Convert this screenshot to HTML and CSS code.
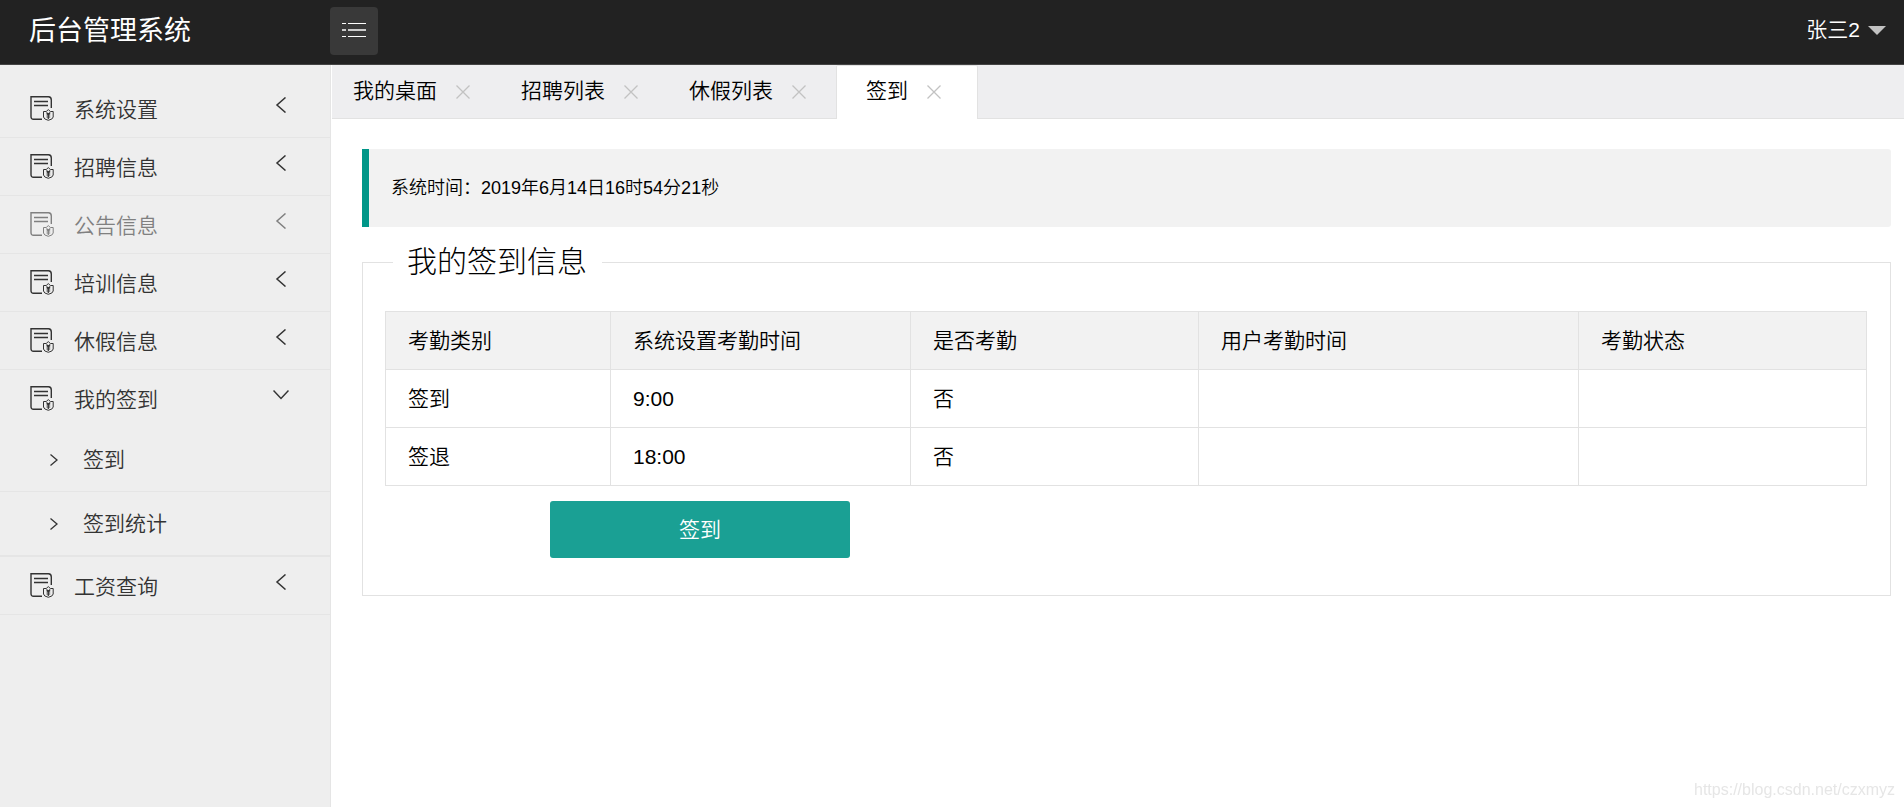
FILE: index.html
```html
<!DOCTYPE html>
<html lang="zh-CN">
<head>
<meta charset="utf-8">
<title>后台管理系统</title>
<link rel="stylesheet" href="styles.css">
</head>
<body>
<svg class="sprite" aria-hidden="true">
  <symbol id="icon-record" viewBox="0 0 24 25">
    <path d="M12 23.300H3.500Q1 23.300 1 20.500V.8H18.500Q21.300 .8 21.300 4V12M4 5.500H18M4 9.500H18" fill="none" stroke="currentColor" stroke-width="1.400"/>
    <path d="M13.500 15.500H16.200L18.300 13.600 20.400 15.500H23.200V21Q23 23.300 18.300 24.300Q13.700 23.300 13.500 21Z" fill="none" stroke="currentColor" stroke-width="1"/>
    <path d="M16.500 16.500L18.300 18.500 20.200 16.500M16.500 19H20.200M16.500 21H20.200M18.300 18.500V23" fill="none" stroke="currentColor" stroke-width="1.200"/>
  </symbol>
  <symbol id="icon-left" viewBox="0 0 16 16"><path d="M12.500 .5L4 8L12.500 15.500" fill="none" stroke="currentColor" stroke-width="1.500"/></symbol>
  <symbol id="icon-down" viewBox="0 0 16 16"><path d="M.5 3.500L8 11.500L15.500 3.500" fill="none" stroke="currentColor" stroke-width="1.500"/></symbol>
  <symbol id="icon-right" viewBox="0 0 8 12"><path d="M.5 .5L7 6L.5 11.500" fill="none" stroke="currentColor" stroke-width="1.300"/></symbol>
  <symbol id="icon-close" viewBox="0 0 14 14"><path d="M.5 .5L13.500 13.500M13.500 .5L.5 13.500" fill="none" stroke="currentColor" stroke-width="1.300"/></symbol>
</svg>

<header class="header">
  <h1 class="logo">后台管理系统</h1>
  <button class="toggle" type="button" aria-label="切换菜单">
    <svg width="24" height="16" viewBox="0 0 24 16"><path d="M0 1.500H4M6 1.500H24M0 14.500H4M6 14.500H24" stroke="#fff" stroke-width="1"/><path d="M0 8H4M6 8H24" stroke="#ccc" stroke-width="2"/></svg>
  </button>
  <button class="user" type="button"><span class="user-name">张三2</span><span class="caret"></span></button>
</header>

<div class="layout">
  <nav class="sidebar">
    <button class="menu-item" type="button"><svg class="menu-icon"><use href="#icon-record"/></svg><span>系统设置</span><svg class="arrow"><use href="#icon-left"/></svg></button>
    <button class="menu-item" type="button"><svg class="menu-icon"><use href="#icon-record"/></svg><span>招聘信息</span><svg class="arrow"><use href="#icon-left"/></svg></button>
    <button class="menu-item muted" type="button"><svg class="menu-icon"><use href="#icon-record"/></svg><span>公告信息</span><svg class="arrow"><use href="#icon-left"/></svg></button>
    <button class="menu-item" type="button"><svg class="menu-icon"><use href="#icon-record"/></svg><span>培训信息</span><svg class="arrow"><use href="#icon-left"/></svg></button>
    <button class="menu-item" type="button"><svg class="menu-icon"><use href="#icon-record"/></svg><span>休假信息</span><svg class="arrow"><use href="#icon-left"/></svg></button>
    <button class="menu-item open" type="button" aria-expanded="true"><svg class="menu-icon"><use href="#icon-record"/></svg><span>我的签到</span><svg class="arrow"><use href="#icon-down"/></svg></button>
    <div class="submenu">
      <a class="sub-item" href="#"><svg class="sub-icon"><use href="#icon-right"/></svg>签到</a>
      <a class="sub-item" href="#"><svg class="sub-icon"><use href="#icon-right"/></svg>签到统计</a>
    </div>
    <button class="menu-item" type="button"><svg class="menu-icon"><use href="#icon-record"/></svg><span>工资查询</span><svg class="arrow"><use href="#icon-left"/></svg></button>
  </nav>

  <main class="main">
    <div class="tabs">
      <div class="tab"><a href="#">我的桌面</a><button class="close" type="button" aria-label="关闭"><svg><use href="#icon-close"/></svg></button></div>
      <div class="tab"><a href="#">招聘列表</a><button class="close" type="button" aria-label="关闭"><svg><use href="#icon-close"/></svg></button></div>
      <div class="tab"><a href="#">休假列表</a><button class="close" type="button" aria-label="关闭"><svg><use href="#icon-close"/></svg></button></div>
      <div class="tab active"><a href="#">签到</a><button class="close" type="button" aria-label="关闭"><svg><use href="#icon-close"/></svg></button></div>
    </div>

    <div class="content">
      <p class="clock">系统时间：2019年6月14日16时54分21秒</p>
      <fieldset class="panel">
        <legend>我的签到信息</legend>
        <table class="records">
          <colgroup><col class="col-type"><col class="col-set"><col class="col-mid"><col class="col-time"><col class="col-mid"></colgroup>
          <thead>
            <tr><th>考勤类别</th><th>系统设置考勤时间</th><th>是否考勤</th><th>用户考勤时间</th><th>考勤状态</th></tr>
          </thead>
          <tbody>
            <tr><td>签到</td><td>9:00</td><td>否</td><td></td><td></td></tr>
            <tr><td>签退</td><td>18:00</td><td>否</td><td></td><td></td></tr>
          </tbody>
        </table>
        <button class="submit" type="button">签到</button>
      </fieldset>
    </div>
  </main>
</div>
<div class="watermark">https://blog.csdn.net/czxmyz</div>
</body>
</html>
```
FILE: styles.css
```css
* {
  box-sizing: border-box;
}

body {
  margin: 0;
  min-height: 100vh;
  display: flex;
  flex-direction: column;
  background: #fff;
  color: #000;
  font: 350 21px/30px "Liberation Sans", "Noto Sans CJK SC", sans-serif;
}

button {
  margin: 0;
  padding: 0;
  border: 0;
  background: none;
  color: inherit;
  font: inherit;
  cursor: pointer;
}

a {
  color: inherit;
  text-decoration: none;
}

svg {
  display: block;
  flex: none;
}

.sprite {
  position: absolute;
  width: 0;
  height: 0;
}

.header {
  display: flex;
  align-items: center;
  height: 65px;
  padding: 0 18px 3px 29px;
  background: #222;
  border-bottom: 1px solid #444;
  color: #fff;
}

.logo {
  width: 301px;
  margin: 0;
  font-size: 27px;
  font-weight: 400;
}

.toggle {
  display: grid;
  place-items: center;
  width: 48px;
  height: 48px;
  padding-bottom: 2px;
  border-radius: 4px;
  background: #393939;
}

.user {
  display: flex;
  align-items: center;
  gap: 8px;
  margin-left: auto;
}

.user-name {
  padding-bottom: 2px;
}

.caret {
  border: 9px solid transparent;
  border-top-color: #c2c2c2;
  border-bottom: 0;
}

.layout {
  display: flex;
  flex: 1;
}

.sidebar {
  flex: none;
  width: 331px;
  padding-top: 15px;
  background: #eee;
  border-right: 1px solid #e5e5e5;
  color: #333;
}

.menu-item {
  display: flex;
  align-items: center;
  width: 100%;
  height: 58px;
  padding: 0 41px 0 30px;
  border-bottom: 1px solid #e5e5e5;
}

.menu-item span {
  padding-top: 2px;
}

.menu-item.open {
  border-bottom-color: transparent;
}

.muted {
  color: #808080;
}

.menu-icon {
  width: 24px;
  height: 25px;
  margin-right: 20px;
}

.arrow {
  width: 16px;
  height: 16px;
  margin: 0 0 8px auto;
}

.submenu {
  border-bottom: 1px solid #e5e5e5;
}

.sub-item {
  display: flex;
  align-items: center;
  gap: 25px;
  height: 64px;
  padding-left: 50px;
  border-bottom: 1px solid #e5e5e5;
}

.sub-icon {
  width: 8px;
  height: 12px;
}

.main {
  flex: 1;
  min-width: 0;
  padding-left: 1px;
}

.tabs {
  display: flex;
  height: 54px;
  background: #eeeef0;
  border-bottom: 1px solid #e2e2e2;
}

.tab {
  display: flex;
  align-items: center;
  gap: 19px;
  padding: 0 30px 0 21px;
}

.tab a {
  padding-bottom: 2px;
}

.tab.active {
  height: 54px;
  padding: 0 36px 1px 29px;
  background: #fff;
  border: 1px solid #e2e2e2;
  border-bottom: 0;
  border-radius: 2px 2px 0 0;
}

.close {
  color: #c2c2c2;
}

.close svg {
  width: 14px;
  height: 14px;
}

.content {
  padding: 30px 13px 30px 30px;
}

.clock {
  margin: 0 0 15px;
  padding: 24px 22px;
  border-left: 7px solid #009688;
  border-radius: 0 3px 3px 0;
  background: #f2f2f2;
  font-size: 18px;
}

.panel {
  min-width: 0;
  margin: 0;
  padding: 29px 23px 37px 22px;
  border: 1px solid #e2e2e2;
}

.panel legend {
  margin-left: 8px;
  padding: 0 15px 0 14px;
  font-size: 30px;
  font-weight: 300;
  line-height: 40px;
}

.records {
  width: 100%;
  table-layout: fixed;
  border-collapse: collapse;
}

.records th,
.records td {
  height: 58px;
  padding: 0 22px;
  border: 1px solid #e2e2e2;
  font-weight: 350;
  text-align: left;
}

.records th {
  background: #f2f2f2;
}

.col-type {
  width: 225px;
}

.col-set {
  width: 300px;
}

.col-mid {
  width: 19.450%;
}

.submit {
  display: block;
  width: 300px;
  height: 57px;
  margin: 15px 0 0 165px;
  border-radius: 3px;
  background: #1aa094;
  color: #fff;
}

.watermark {
  position: fixed;
  right: 9px;
  bottom: 7px;
  color: #e6e6e6;
  font-size: 16px;
  line-height: 20px;
}
```
